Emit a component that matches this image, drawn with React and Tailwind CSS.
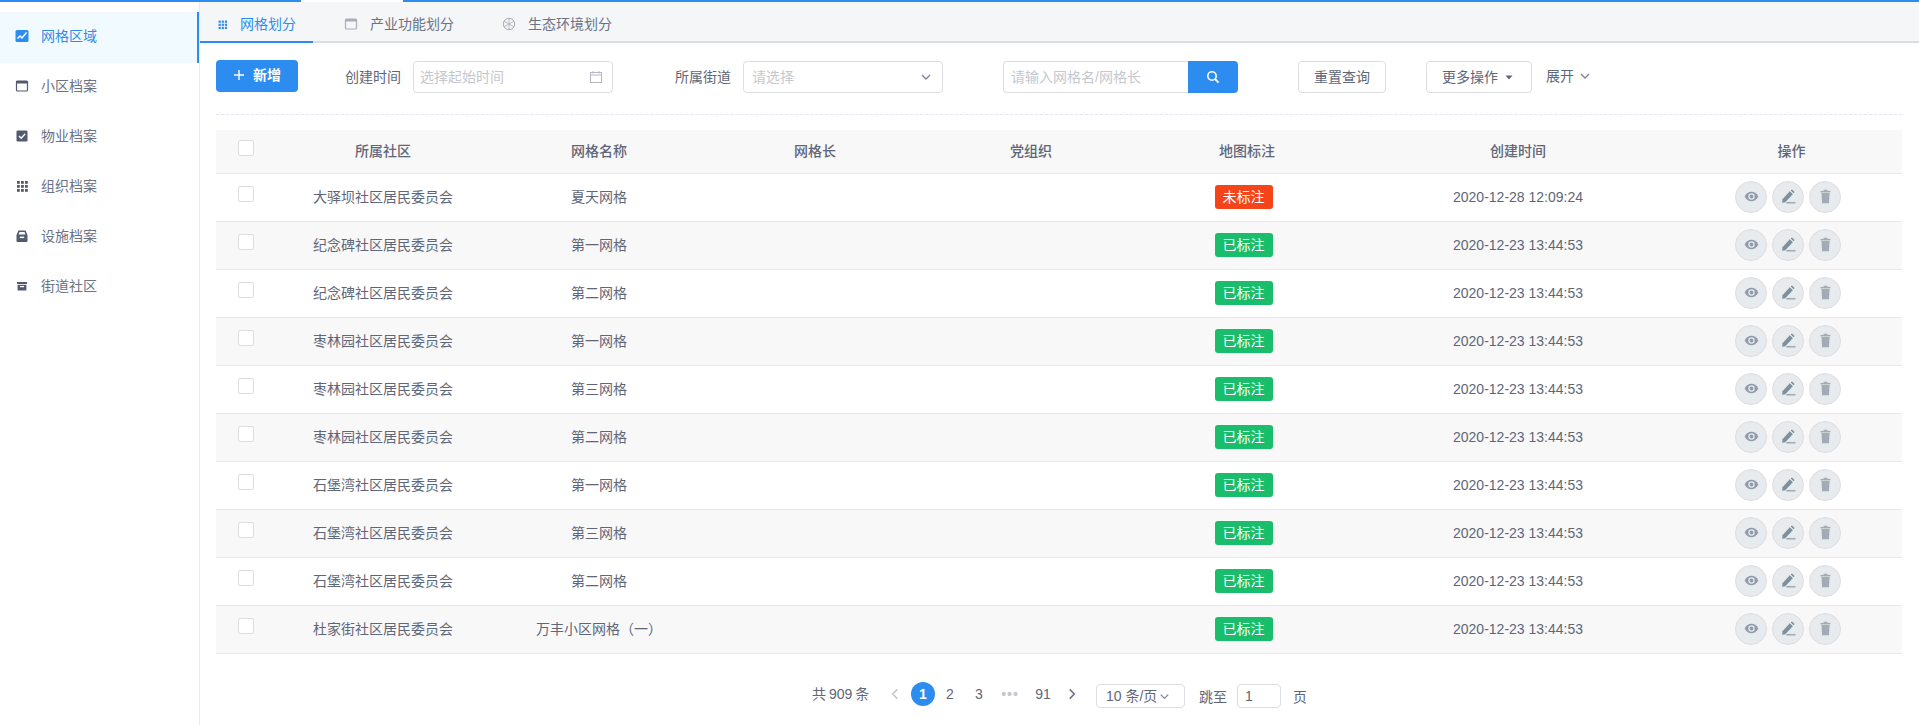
import React from "react";

const FONT = "font-['Liberation_Sans','Noto_Sans_CJK_SC',sans-serif]";

const Svg = ({ s = 14, className = "", children }) => (
  <svg width={s} height={s} viewBox="0 0 14 14" className={`shrink-0 ${className}`}>{children}</svg>
);

const IconChart = () => (
  <Svg className="text-[#2d8cf0]">
    <rect x="0.5" y="1" width="13" height="12" rx="1.5" fill="currentColor" />
    <path d="M2.5 9.5 L5 7 L7 9 L11.5 3.5" fill="none" stroke="#fff" strokeWidth="1.5" />
  </Svg>
);
const IconWindow = ({ className = "text-[#515a6e]" }) => (
  <Svg className={className}>
    <rect x="1.5" y="2" width="11" height="10" rx="1" fill="none" stroke="currentColor" strokeWidth="1.2" />
    <rect x="1.5" y="2" width="11" height="2.5" fill="currentColor" />
  </Svg>
);
const IconCheck = () => (
  <Svg className="text-[#515a6e]">
    <rect x="1.5" y="1.5" width="11" height="11" rx="1.2" fill="currentColor" />
    <path d="M4 7 L6.2 9.2 L10.2 4.8" fill="none" stroke="#fff" strokeWidth="1.4" />
  </Svg>
);
const IconGrid = ({ s = 14, className = "text-[#515a6e]" }) => (
  <Svg s={s} className={className}>
    {[2, 6, 10].flatMap((y) =>
      [2, 6, 10].map((x) => <rect key={`${x}-${y}`} x={x} y={y} width="2.8" height="2.8" fill="currentColor" />)
    )}
  </Svg>
);
const IconTray = () => (
  <Svg className="text-[#515a6e]">
    <path d="M3.5 1.5 H10.5 L12.5 6 V12 A1 1 0 0 1 11.5 13 H2.5 A1 1 0 0 1 1.5 12 V6 Z M4.5 3 L3.6 5.5 H10.4 L9.5 3 Z" fill="currentColor" fillRule="evenodd" />
    <rect x="4.8" y="7.6" width="4.4" height="1.5" fill="#fff" />
  </Svg>
);
const IconArchive = () => (
  <Svg className="text-[#515a6e]">
    <rect x="2" y="3" width="10" height="2" fill="currentColor" />
    <path d="M2.6 5.8 H11.4 V11.5 H2.6 Z" fill="currentColor" />
    <rect x="5" y="7" width="4" height="1.2" fill="#fff" />
  </Svg>
);
const IconAperture = () => (
  <Svg className="text-[#a9adb5]">
    <circle cx="7" cy="7" r="5.7" fill="none" stroke="currentColor" strokeWidth="1" />
    <path d="M7 1.3 V7 M7 7 L12 9.8 M7 7 L2 9.8 M2 4.2 L7 7 M12 4.2 L7 7 M7 7 V12.7" stroke="currentColor" strokeWidth="0.8" />
  </Svg>
);
const IconCalendar = () => (
  <Svg className="text-[#b4b8c0]">
    <rect x="1.5" y="2.5" width="11" height="10" fill="none" stroke="currentColor" strokeWidth="1" />
    <path d="M1.5 5 H12.5 M4 1 V3.5 M10 1 V3.5" stroke="currentColor" strokeWidth="1" />
  </Svg>
);
const Chevron = ({ s = 12, className = "text-[#808695]", dir = "down" }) => {
  const d = { down: "M3 5 L7 9 L11 5", left: "M9 3 L5 7 L9 11", right: "M5 3 L9 7 L5 11" }[dir];
  return (
    <Svg s={s} className={className}>
      <path d={d} fill="none" stroke="currentColor" strokeWidth="1.4" />
    </Svg>
  );
};
const IconSearch = () => (
  <Svg s={14} className="text-white">
    <circle cx="6" cy="6" r="4.2" fill="none" stroke="currentColor" strokeWidth="1.6" />
    <path d="M9 9 L12.6 12.6" stroke="currentColor" strokeWidth="1.8" />
  </Svg>
);
const IconEye = () => (
  <Svg s={15} className="text-[#8f9bab]">
    <path d="M0.6 7 C2.4 3.6 4.6 2.6 7 2.6 C9.4 2.6 11.6 3.6 13.4 7 C11.6 10.4 9.4 11.4 7 11.4 C4.6 11.4 2.4 10.4 0.6 7 Z" fill="currentColor" />
    <circle cx="7" cy="7" r="3" fill="#e8ebee" />
    <circle cx="7" cy="7" r="1.8" fill="currentColor" />
  </Svg>
);
const IconPen = () => (
  <Svg s={15} className="text-[#7e909f]">
    <path d="M1.4 9.6 L8.2 2.2 L11 4.8 L4 12.4 L1 12.9 Z" fill="currentColor" />
    <path d="M9 1.5 L10.2 0.4 L12.8 2.8 L11.7 4 Z" fill="currentColor" />
    <rect x="5" y="12.4" width="8.5" height="1" fill="currentColor" />
  </Svg>
);
const IconTrash = () => (
  <Svg s={15} className="text-[#a3abb6]">
    <rect x="2.4" y="1.8" width="9.2" height="1.4" fill="currentColor" />
    <rect x="5.2" y="0.7" width="3.6" height="1.3" fill="currentColor" />
    <path d="M3.2 3.8 H10.8 L10.2 13.2 H3.8 Z" fill="currentColor" />
  </Svg>
);

const menu = [
  { label: "网格区域", icon: <IconChart />, active: true },
  { label: "小区档案", icon: <IconWindow /> },
  { label: "物业档案", icon: <IconCheck /> },
  { label: "组织档案", icon: <IconGrid /> },
  { label: "设施档案", icon: <IconTray /> },
  { label: "街道社区", icon: <IconArchive /> },
];

const rows = [
  ["大驿坝社区居民委员会", "夏天网格", "未标注", "2020-12-28 12:09:24"],
  ["纪念碑社区居民委员会", "第一网格", "已标注", "2020-12-23 13:44:53"],
  ["纪念碑社区居民委员会", "第二网格", "已标注", "2020-12-23 13:44:53"],
  ["枣林园社区居民委员会", "第一网格", "已标注", "2020-12-23 13:44:53"],
  ["枣林园社区居民委员会", "第三网格", "已标注", "2020-12-23 13:44:53"],
  ["枣林园社区居民委员会", "第二网格", "已标注", "2020-12-23 13:44:53"],
  ["石堡湾社区居民委员会", "第一网格", "已标注", "2020-12-23 13:44:53"],
  ["石堡湾社区居民委员会", "第三网格", "已标注", "2020-12-23 13:44:53"],
  ["石堡湾社区居民委员会", "第二网格", "已标注", "2020-12-23 13:44:53"],
  ["杜家街社区居民委员会", "万丰小区网格（一）", "已标注", "2020-12-23 13:44:53"],
];

const COLS = "grid grid-cols-[59px_216px_216px_216px_216px_216px_326px_221px] items-center text-center";
const Box = () => (
  <span className="ml-[22px] mb-[6px] block h-4 w-4 rounded-[2px] border border-[#dcdee2] bg-white" />
);
const Action = ({ children }) => (
  <span className="mr-[5px] flex h-8 w-8 items-center justify-center rounded-full border border-[#dcdee2] bg-[#e8ebee]">
    {children}
  </span>
);

export default function App() {
  return (
    <div className={`flex h-[725px] w-[1919px] flex-col overflow-hidden bg-white text-sm text-[#5f6678] ${FONT}`}>
      <div className="flex h-[2px] shrink-0">
        <div className="w-[301px] bg-[#2d8cf0]" />
        <div className="w-[102px] bg-white" />
        <div className="flex-1 bg-[#2d8cf0]" />
      </div>
      <div className="flex min-h-0 flex-1">
        <aside className="w-[200px] shrink-0 border-r border-[#e8eaec] pt-[10px]">
          {menu.map((m) => (
            <div
              key={m.label}
              className={`mb-[-1px] flex h-[51px] items-center gap-[12px] pb-[3px] pl-[15px] ${
                m.active ? "border-r-2 border-[#2d8cf0] bg-[#f0faff] text-[#2d8cf0]" : "text-[#6b7284]"
              }`}
            >
              {m.icon}
              <span>{m.label}</span>
            </div>
          ))}
        </aside>
        <main className="min-w-0 flex-1">
          <div className="flex h-[41px] items-center border-b-2 border-[#dcdee2] bg-[#f5f6f8] text-[#6b7284]">
            <div className="-mb-[2px] flex h-[41px] w-[113px] items-center gap-[12px] border-b-2 border-[#2d8cf0] pl-[17px] pt-[5px] text-[#2d8cf0]">
              <IconGrid s={11} className="text-[#2d8cf0]" />
              <span>网格划分</span>
            </div>
            <div className="ml-[31px] flex items-center gap-[12px] pt-[5px]">
              <IconWindow className="text-[#a9adb5]" />
              <span>产业功能划分</span>
            </div>
            <div className="ml-[48px] flex items-center gap-[12px] pt-[5px]">
              <IconAperture />
              <span>生态环境划分</span>
            </div>
          </div>

          <div className="pl-[16px] pr-[17px] pt-[17px]">
            <div className="flex h-[33px] items-start">
              <button className="flex h-8 w-[82px] items-center rounded-[4px] bg-[#2d8cf0] pb-[2px] pl-[17px] font-bold text-white">
                <svg width="12" height="12" viewBox="0 0 12 12" className="mr-[8px]">
                  <path d="M6 1 V11 M1 6 H11" stroke="currentColor" strokeWidth="1.4" />
                </svg>
                新增
              </button>
              <span className="ml-[47px] mt-[1px] w-14 whitespace-nowrap leading-8">创建时间</span>
              <div className="ml-[12px] mt-[1px] flex h-8 w-[200px] items-center justify-between rounded-[4px] border border-[#dcdee2] pl-[6px] pr-[9px] text-[#c5c8ce]">
                <span>选择起始时间</span>
                <IconCalendar />
              </div>
              <span className="ml-[62px] mt-[1px] w-14 whitespace-nowrap leading-8">所属街道</span>
              <div className="ml-[12px] mt-[1px] flex h-8 w-[200px] items-center justify-between rounded-[4px] border border-[#dcdee2] pl-[8px] pr-[9px] text-[#c5c8ce]">
                <span>请选择</span>
                <Chevron s={14} />
              </div>
              <div className="ml-[60px] mt-[1px] flex h-8 w-[235px]">
                <div className="flex w-[185px] items-center rounded-l-[4px] border border-r-0 border-[#dcdee2] pl-[7px] text-[#c5c8ce]">
                  请输入网格名/网格长
                </div>
                <button className="flex w-[50px] items-center justify-center rounded-r-[4px] bg-[#2d8cf0]">
                  <IconSearch />
                </button>
              </div>
              <button className="ml-[60px] mt-[1px] h-8 w-[88px] rounded-[4px] border border-[#dcdee2] bg-white">
                重置查询
              </button>
              <button className="ml-[40px] mt-[1px] flex h-8 w-[106px] items-center rounded-[4px] border border-[#dcdee2] bg-white pl-[15px]">
                更多操作
                <svg width="8" height="5" viewBox="0 0 8 5" className="ml-[7px]">
                  <path d="M0.5 0.5 H7.5 L4 4.5 Z" fill="currentColor" />
                </svg>
              </button>
              <div className="ml-[14px] flex h-8 items-center gap-[4px]">
                <span>展开</span>
                <Chevron s={14} />
              </div>
            </div>

            <div className="mb-[15px] mt-[21px] border-t border-dashed border-[#e3e3f2]" />

            <div className={`${COLS} h-[44px] border-b border-[#e8eaec] bg-[#f8f8f9] pb-[1px] font-medium`}>
              <Box />
              {["所属社区", "网格名称", "网格长", "党组织", "地图标注", "创建时间", "操作"].map((h) => (
                <span key={h}>{h}</span>
              ))}
            </div>
            {rows.map((r, i) => (
              <div
                key={i}
                className={`${COLS} h-12 border-b border-[#e8eaec] pb-[2px] ${i % 2 ? "bg-[#f8f8f9]" : "bg-white"}`}
              >
                <Box />
                <span>{r[0]}</span>
                <span>{r[1]}</span>
                <span />
                <span />
                <span className="flex justify-center pr-[7px]">
                  <span
                    className={`flex h-6 w-[58px] items-center justify-center rounded-[3px] text-white ${
                      r[2] === "未标注" ? "bg-[#f5431a]" : "bg-[#19be6b]"
                    }`}
                  >
                    {r[2]}
                  </span>
                </span>
                <span>{r[3]}</span>
                <span className="flex justify-center pr-[2px]">
                  <Action><IconEye /></Action>
                  <Action><IconPen /></Action>
                  <Action><IconTrash /></Action>
                </span>
              </div>
            ))}

            <div className="mt-[28px] flex items-start pl-[596px]">
              <span className="mt-[2px] w-[57px] whitespace-nowrap [word-spacing:-1px]">共 909 条</span>
              <span className="ml-[18px] mt-[4px] flex w-4 justify-center"><Chevron s={16} className="text-[#c5c8ce]" dir="left" /></span>
              <span className="ml-[8px] flex h-6 w-6 items-center justify-center rounded-full bg-[#2d8cf0] font-bold text-white">1</span>
              <span className="ml-[7px] mt-[2px] w-4 text-center">2</span>
              <span className="ml-[13px] mt-[2px] w-4 text-center">3</span>
              <span className="ml-[13px] mt-[2px] w-5 text-center font-bold tracking-[1px] text-[#c5c8ce]">•••</span>
              <span className="ml-[13px] mt-[2px] w-5 text-center">91</span>
              <span className="ml-[11px] mt-[4px] flex w-4 justify-center"><Chevron s={16} className="text-[#6b7284]" dir="right" /></span>
              <div className="ml-[16px] mt-[2px] flex h-6 w-[89px] items-center rounded-[4px] border border-[#dcdee2] pl-[9px]">
                <span className="whitespace-nowrap">10 条/页</span>
                <span className="ml-[1px]"><Chevron s={13} /></span>
              </div>
              <span className="ml-[14px] mt-[5px] w-7 whitespace-nowrap">跳至</span>
              <div className="ml-[10px] mt-[2px] flex h-6 w-[44px] items-center rounded-[4px] border border-[#dcdee2] pl-[7px]">1</div>
              <span className="ml-[12px] mt-[5px]">页</span>
            </div>
          </div>
        </main>
      </div>
    </div>
  );
}
